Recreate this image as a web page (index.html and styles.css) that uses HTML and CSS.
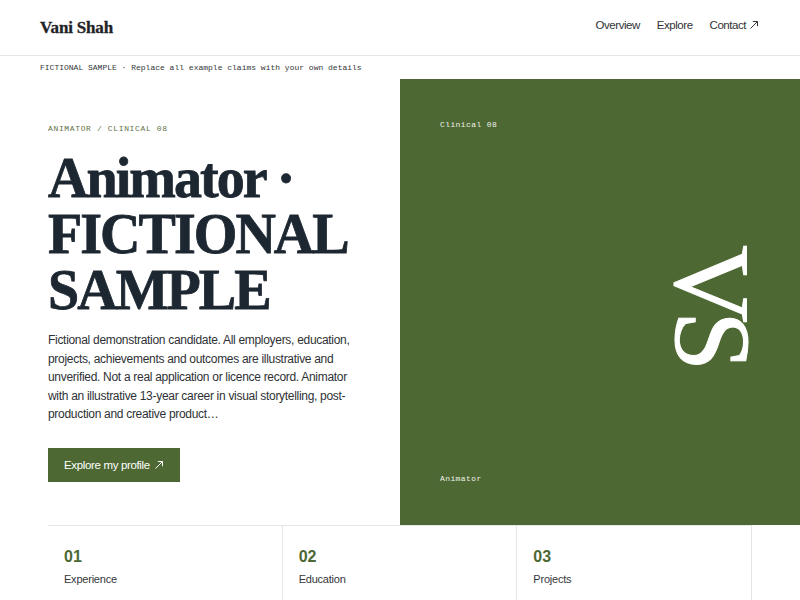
FILE: index.html
```html
<!DOCTYPE html>
<html lang="en">
<head>
<meta charset="utf-8">
<title>Vani Shah — Animator</title>
<link rel="stylesheet" href="styles.css">
</head>
<body>
<header class="site-header">
  <div class="brand">Vani Shah</div>
  <nav class="nav">
    <a href="#overview">Overview</a>
    <a href="#explore">Explore</a>
    <a href="#contact">Contact <svg class="arrow" viewBox="0 0 10 10" width="10" height="10" aria-hidden="true"><path d="M1.5 8.5 L8.5 1.5 M3.8 1.5 H8.5 V6.2"/></svg></a>
  </nav>
</header>
<div class="notice">FICTIONAL SAMPLE · Replace all example claims with your own details</div>
<main>
  <section class="hero">
    <div class="hero-copy">
      <p class="eyebrow">ANIMATOR / CLINICAL 08</p>
      <h1 class="title">Animator · FICTIONAL SAMPLE</h1>
      <p class="lead">Fictional demonstration candidate. All employers, education, projects, achievements and outcomes are illustrative and unverified. Not a real application or licence record. Animator with an illustrative 13-year career in visual storytelling, post-production and creative product…</p>
      <a class="cta" href="#profile">Explore my profile <svg class="arrow" viewBox="0 0 10 10" width="10" height="10" aria-hidden="true"><path d="M1.5 8.5 L8.5 1.5 M3.8 1.5 H8.5 V6.2"/></svg></a>
    </div>
    <div class="hero-panel">
      <span class="panel-label">Clinical 08</span>
      <div class="panel-mark"><span class="monogram">VS</span></div>
      <span class="panel-label">Animator</span>
    </div>
  </section>
  <section class="stats">
    <div class="stat"><div class="stat-num">01</div><div class="stat-label">Experience</div></div>
    <div class="stat"><div class="stat-num">02</div><div class="stat-label">Education</div></div>
    <div class="stat"><div class="stat-num">03</div><div class="stat-label">Projects</div></div>
  </section>
</main>
</body>
</html>
```
FILE: styles.css
```css
* { box-sizing: border-box; }

html, body {
  margin: 0;
  padding: 0;
  background: #ffffff;
}

body {
  font-family: "Liberation Sans", Arial, sans-serif;
  color: #2b2e33;
}

a { color: inherit; text-decoration: none; }

.arrow {
  fill: none;
  stroke: currentColor;
  stroke-width: 1;
  flex: none;
}

/* Header */
.site-header {
  height: 56px;
  padding: 0 41px 0 40px;
  border-bottom: 1px solid #e6e6e6;
  display: flex;
  align-items: center;
  justify-content: space-between;
}

.brand {
  font-family: "Liberation Serif", "Times New Roman", serif;
  font-weight: 700;
  font-size: 17px;
  line-height: 19px;
  letter-spacing: -0.01em;
  color: #1f2328;
  -webkit-text-stroke: 0.3px currentColor;
}

.nav {
  display: flex;
  align-items: center;
  gap: 17px;
  padding-bottom: 5px;
  font-size: 11.5px;
  letter-spacing: -0.04em;
  color: #2f3236;
}

.nav a {
  display: inline-flex;
  align-items: center;
  gap: 3px;
}

/* Notice */
.notice {
  padding: 6px 40px 5px;
  font-family: "Liberation Mono", "Courier New", monospace;
  font-size: 8px;
  line-height: 12px;
  color: #34373b;
}

/* Hero */
.hero {
  display: grid;
  grid-template-columns: 400px 400px;
  min-height: 446px;
}

.hero-copy {
  padding: 44px 40px 0 48px;
}

.eyebrow {
  margin: 0;
  font-family: "Liberation Mono", "Courier New", monospace;
  font-size: 8px;
  line-height: 12px;
  letter-spacing: 0.08em;
  color: #5f7047;
}

.title {
  margin: 15px 0 0;
  font-family: "Liberation Serif", "Times New Roman", serif;
  font-weight: 700;
  font-size: 56px;
  line-height: 56px;
  letter-spacing: -0.035em;
  color: #1d2731;
  -webkit-text-stroke: 0.8px currentColor;
}

.lead {
  margin: 13px 0 0;
  max-width: 312px;
  font-size: 12px;
  line-height: 18.5px;
  letter-spacing: -0.025em;
  color: #2e3135;
}

.cta {
  margin-top: 24px;
  height: 34px;
  padding: 0 16px;
  display: inline-flex;
  align-items: center;
  gap: 4px;
  background: #4d6833;
  color: #ffffff;
  font-size: 11.5px;
  letter-spacing: -0.03em;
}

.hero-panel {
  background: #4d6833;
  padding: 40px 34px 40px 40px;
  display: flex;
  flex-direction: column;
}

.panel-label {
  font-family: "Liberation Mono", "Courier New", monospace;
  font-size: 8px;
  line-height: 12px;
  letter-spacing: 0.05em;
  color: #eef1e8;
}

.panel-mark {
  flex: 1;
  display: flex;
  align-items: center;
  justify-content: flex-end;
}

.monogram {
  writing-mode: vertical-rl;
  font-family: "Liberation Serif", "Times New Roman", serif;
  font-weight: 400;
  font-size: 108px;
  line-height: 1;
  letter-spacing: -0.11em;
  color: #ffffff;
  -webkit-text-stroke: 1px currentColor;
}

/* Stats */
.stats {
  margin: 0 48px;
  border-top: 1px solid #e6e6e6;
  display: grid;
  grid-template-columns: repeat(3, 1fr);
}

.stat {
  padding: 22px 16px 30px;
  border-right: 1px solid #e6e6e6;
}

.stat-num {
  font-weight: 700;
  font-size: 16px;
  line-height: 18px;
  color: #4d6833;
}

.stat-label {
  margin-top: 7px;
  font-size: 11px;
  line-height: 13px;
  letter-spacing: -0.02em;
  color: #34373b;
}
```
